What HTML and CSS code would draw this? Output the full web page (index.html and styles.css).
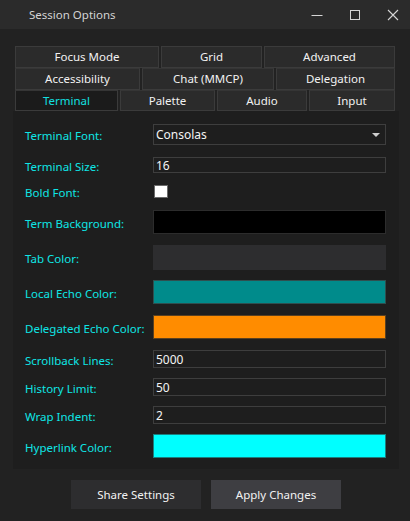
FILE: index.html
```html
<!DOCTYPE html>
<html>
<head>
<meta charset="utf-8">
<title>Session Options</title>
<link rel="stylesheet" href="styles.css">
</head>
<body>
<div class="window">
  <header class="titlebar">
    <span class="title">Session Options</span>
    <div class="controls">
      <svg class="ctl" width="12" height="12" viewBox="0 0 12 12"><path d="M0.5 6.5H11.5" stroke="#d6d6d6" stroke-width="1"/></svg>
      <svg class="ctl" width="12" height="12" viewBox="0 0 12 12"><rect x="1.5" y="1.5" width="9" height="9" fill="none" stroke="#d6d6d6" stroke-width="1"/></svg>
      <svg class="ctl" width="12" height="12" viewBox="0 0 12 12"><path d="M1 1L11 11M11 1L1 11" stroke="#d6d6d6" stroke-width="1.1"/></svg>
    </div>
  </header>

  <main class="body">
    <div class="tabs">
      <div class="tab-row">
        <div class="tab w144">Focus Mode</div>
        <div class="tab w101">Grid</div>
        <div class="tab w131">Advanced</div>
      </div>
      <div class="tab-row">
        <div class="tab w125">Accessibility</div>
        <div class="tab w132">Chat (MMCP)</div>
        <div class="tab w119">Delegation</div>
      </div>
      <div class="tab-row last">
        <div class="tab active w103">Terminal</div>
        <div class="tab w95">Palette</div>
        <div class="tab w90">Audio</div>
        <div class="tab w86">Input</div>
      </div>
    </div>

    <section class="panel">
      <div class="row h21">
        <label class="lbl">Terminal Font:</label>
        <div class="field combo"><span>Consolas</span><span class="arrow"></span></div>
      </div>
      <div class="row h16">
        <label class="lbl">Terminal Size:</label>
        <div class="field">16</div>
      </div>
      <div class="row h13">
        <label class="lbl">Bold Font:</label>
        <div class="check"></div>
      </div>
      <div class="row h24">
        <label class="lbl">Term Background:</label>
        <div class="swatch black"></div>
      </div>
      <div class="row h25 g11">
        <label class="lbl">Tab Color:</label>
        <div class="swatch empty"></div>
      </div>
      <div class="row h24 g10">
        <label class="lbl">Local Echo Color:</label>
        <div class="swatch teal"></div>
      </div>
      <div class="row h24 g11">
        <label class="lbl">Delegated Echo Color:</label>
        <div class="swatch orange"></div>
      </div>
      <div class="row h18 g11">
        <label class="lbl">Scrollback Lines:</label>
        <div class="field">5000</div>
      </div>
      <div class="row h18 g10">
        <label class="lbl">History Limit:</label>
        <div class="field">50</div>
      </div>
      <div class="row h18 g10">
        <label class="lbl">Wrap Indent:</label>
        <div class="field">2</div>
      </div>
      <div class="row h24 g10">
        <label class="lbl">Hyperlink Color:</label>
        <div class="swatch cyan"></div>
      </div>
    </section>

    <div class="actions">
      <button class="btn share">Share Settings</button>
      <button class="btn apply">Apply Changes</button>
    </div>
  </main>
</div>
</body>
</html>
```

FILE: styles.css
```css
* { box-sizing: border-box; }

html, body {
  margin: 0;
  padding: 0;
  background: #222222;
}

body {
  width: 410px;
  height: 521px;
  overflow: hidden;
  font-family: "Noto Sans", "Open Sans", sans-serif;
  font-size: 11.5px;
  color: #f0f0f0;
}

.window {
  width: 410px;
  height: 521px;
  display: flex;
  flex-direction: column;
}

/* title bar */
.titlebar {
  height: 29px;
  background: #2b2b2b;
  display: flex;
  align-items: center;
  justify-content: space-between;
  padding-left: 29px;
}

.title {
  color: #d4d4d4;
  font-size: 11.5px;
}

.controls {
  display: flex;
  align-items: center;
  gap: 26px;
  padding-right: 11px;
}

.ctl { display: block; }

/* window body */
.body {
  flex: 1;
  display: flex;
  flex-direction: column;
  padding: 17px 11px 0 13px;
}

/* tab strip */
.tabs {
  display: flex;
  flex-direction: column;
  padding-left: 2px;
}

.tab-row {
  display: flex;
  gap: 2px;
  height: 22px;
}

.tab-row.last { height: 21px; }

.tab {
  height: 22px;
  background: #2b2b2b;
  border: 1px solid #3b3b3b;
  color: #f2f2f2;
  display: flex;
  align-items: center;
  justify-content: center;
  padding-bottom: 1px;
  white-space: nowrap;
}

.tab-row + .tab-row .tab { border-top-color: #353535; }
.tab-row.last .tab { height: 21px; }

.tab.active {
  background: #1b1b1b;
  color: #12e0e0;
}

.w144 { width: 144px; }
.w101 { width: 101px; }
.w131 { width: 131px; }
.w125 { width: 125px; }
.w132 { width: 132px; }
.w119 { width: 119px; }
.w103 { width: 103px; }
.w95  { width: 95px; }
.w90  { width: 90px; }
.w86  { width: 86px; }

/* page panel */
.panel {
  width: 386px;
  height: 358px;
  background: #1e1e1e;
  padding: 13px 13px 0 12px;
  display: flex;
  flex-direction: column;
}

.row {
  display: flex;
  align-items: center;
  margin-top: 12px;
}

.row:first-child { margin-top: 0; }
.row.g11 { margin-top: 11px; }
.row.g10 { margin-top: 10px; }

.h13 { height: 13px; }
.h16 { height: 16px; }
.h18 { height: 18px; }
.h21 { height: 21px; }
.h24 { height: 24px; }
.h25 { height: 25px; }

.lbl {
  width: 128px;
  flex: none;
  color: #0ee6e6;
  white-space: nowrap;
  padding-top: 2px;
}

.field {
  width: 234px;
  height: 100%;
  border: 1px solid #3e3e3e;
  background: #1e1e1e;
  color: #f4f4f4;
  display: flex;
  align-items: center;
  padding-left: 2px;
  font-size: 12px;
}

.combo {
  justify-content: space-between;
  padding-right: 5px;
}

.arrow {
  width: 0;
  height: 0;
  border-left: 4px solid transparent;
  border-right: 4px solid transparent;
  border-top: 4px solid #cfcfcf;
  margin-top: 1px;
}

.check {
  width: 14px;
  height: 13px;
  margin-left: 1px;
  background: #ffffff;
  border: 1px solid #6a6a6a;
}

.swatch {
  width: 234px;
  height: 100%;
  border: 1px solid #3a3a3a;
}

.swatch.black { background: #000000; border-color: #2c2c2c; }
.swatch.empty { background: #2d2d2f; border-color: #2d2d2f; }
.swatch.teal { background: #008b8b; border-color: #2f4f4f; }
.swatch.orange { background: #ff8c00; border-color: #5a4020; }
.swatch.cyan { background: #00ffff; border-color: #1a7f7f; }

/* bottom buttons */
.actions {
  display: flex;
  justify-content: center;
  gap: 10px;
  padding-top: 11px;
}

.btn {
  width: 130px;
  height: 29px;
  border: none;
  font-family: inherit;
  font-size: 11.5px;
  color: #f2f2f2;
  padding: 0;
}

.btn.share { background: #2d2d2f; }
.btn.apply { background: #3e3e42; }
```
